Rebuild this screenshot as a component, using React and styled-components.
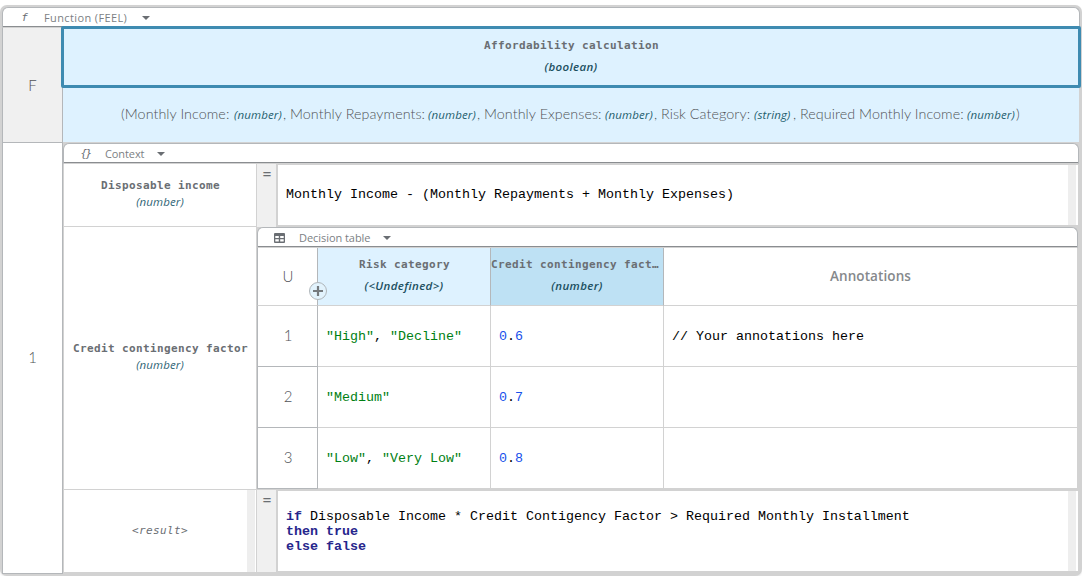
import React from 'react';
import styled, { createGlobalStyle, css } from 'styled-components';

const GRAY = '#d2d2d2';
const LINE = '#b4b7ba';
const HEAD = '#def2ff';

const Global = createGlobalStyle`
  * { box-sizing: border-box; }
  body { margin: 0; background: #fff; overflow: hidden; }
`;

const sans = css`font-family: Lato, "Open Sans", sans-serif; white-space: pre;`;

const Frame = styled.main`
  width: 1082px;
  height: 571px;
  margin-top: 5px;
  padding: 2px;
  background: ${GRAY};
  border-radius: 7px;
  box-shadow: 0 1px 2px #e6e6e6;
  display: flex;
  flex-direction: column;
`;

const Bar = styled.header`
  flex: none;
  height: 21px;
  border: 1px solid ${LINE};
  border-bottom: 1px solid ${GRAY};
  box-shadow: inset 0 -1px 0 #8a8d90;
  border-radius: 6px 6px 0 0;
  background: #fff;
  display: flex;
  align-items: center;
  color: #6a6e73;
`;

const BarIcon = styled.span`
  width: 15px;
  height: 18px;
  margin-left: 14px;
  display: flex;
  align-items: center;
  justify-content: center;
`;

const BarGlyph = styled.i`
  font: italic ${(p) => p.$bold || 400} 11px/16px "DejaVu Sans Mono", monospace;
  letter-spacing: ${(p) => p.$ls || 0}px;
`;

const BarTitle = styled.span`
  font-family: "Open Sans", sans-serif;
  white-space: pre;
  margin-left: 12px;
  width: ${(p) => p.$w}px;
  font-size: 11px;
  line-height: 16px;
  letter-spacing: ${(p) => p.$ls}px;
  color: #7c7f84;
`;

const Caret = styled.span`
  margin-left: 13px;
  border: 4px solid transparent;
  border-top-color: #6a6e73;
  border-bottom: 0;
`;

const FunctionBody = styled.div`
  display: grid;
  grid-template-columns: 61px 1016px;
  grid-template-rows: 115px 431px;
`;

const IndexCell = styled.div`
  ${sans}
  display: flex;
  align-items: center;
  justify-content: center;
  background: ${(p) => (p.$shaded ? '#f0f0f0' : '#fff')};
  border: 1px solid ${LINE};
  border-top: 0;
  padding-bottom: ${(p) => (p.$shaded ? 1 : 3)}px;
  font-size: 15px;
  font-weight: 300;
  color: #505357;
`;

const FunctionHead = styled.div`
  display: flex;
  flex-direction: column;
  background: ${HEAD};
  border-bottom: 1px solid ${GRAY};
`;

const Signature = styled.div`
  flex: none;
  height: 62px;
  width: 1020px;
  margin: -2px 0 0 -2px;
  position: relative;
  border: 3px solid #3e8bb1;
  border-radius: 2px;
  background: ${HEAD};
  padding-top: 6px;
  text-align: center;
`;

const Name = styled.div`
  height: ${(p) => p.$h || 21}px;
  font: bold 11px/${(p) => p.$h || 22}px "DejaVu Sans Mono", monospace;
  letter-spacing: 0.378px;
  padding-left: ${(p) => p.$pl ?? 1}px;
  color: #6a6e73;
  white-space: nowrap;
  overflow: hidden;
  text-overflow: ellipsis;
`;

const Type = styled.div`
  font-family: "Open Sans", sans-serif;
  height: ${(p) => p.$h || 22}px;
  line-height: ${(p) => p.$h || 22}px;
  font-size: 11.5px;
  font-style: italic;
  font-weight: ${(p) => (p.$strong ? 600 : 400)};
  letter-spacing: ${(p) => (p.$strong ? 0.35 : 0.1)}px;
  color: ${(p) => (p.$strong ? '#1b4f60' : '#2f6576')};
`;

const Params = styled.div`
  ${sans}
  flex: 1;
  display: flex;
  justify-content: center;
  line-height: 52px;
  font-size: 14.3px;
  font-weight: 300;
  color: #505357;
`;

const Param = styled.span`
  display: flex;
  align-items: baseline;
`;

const Label = styled.span`
  width: ${(p) => p.$w}px;
  letter-spacing: 0.07px;
`;

const TypeTag = styled.span`
  width: ${(p) => p.$w}px;
  font: italic 400 11.5px/20px "Open Sans", sans-serif;
  letter-spacing: 0.15px;
  color: #24606e;
`;

const Separator = styled.span`
  width: ${(p) => p.$w}px;
`;

const ContextBox = styled.div`
  display: flex;
  flex-direction: column;
`;

const Entries = styled.div`
  width: 1014px;
  margin-left: 1px;
  display: grid;
  grid-template-columns: 193px 821px;
  grid-template-rows: 63px 263px 82px;
`;

const Entry = styled.div`
  display: flex;
  flex-direction: column;
  align-items: center;
  justify-content: center;
  padding-bottom: ${(p) => (p.$last ? 0 : 3)}px;
  background: #fff;
  border-right: 1px solid ${GRAY};
  border-bottom: ${(p) => (p.$last ? 0 : 1)}px solid ${GRAY};
  ${(p) => p.$last && css`
    background: linear-gradient(90deg, #fff 183px, #eee 183px, #eee 191px, #fff 191px);
  `}
`;

const ResultName = styled.i`
  font: italic 11px/16px "DejaVu Sans Mono", monospace;
  letter-spacing: 0.378px;
  color: #6a6e73;
`;

const Literal = styled.div`
  display: grid;
  grid-template-columns: 19px 802px;
`;

const Equals = styled.div`
  background: #f0f0f0;
  color: #6a6e73;
  text-align: center;
  padding-left: 1px;
  font: 14px/20px "DejaVu Sans Mono", monospace;
`;

const Editor = styled.pre`
  margin: 0;
  border: 2px solid ${GRAY};
  border-top-width: 1px;
  border-right: 0;
  border-bottom-width: ${(p) => p.$bb ?? 2}px;
  padding: ${(p) => p.$pt}px 0 0 8px;
  background: linear-gradient(90deg, #fff 790px, #eee 790px, #eee 798px, #fff 798px);
  font: 13.333px/15px "Liberation Mono", monospace;
  color: #000;
  b { color: #26268c; }
`;

const TableBox = styled.div`
  display: flex;
  flex-direction: column;
`;

const Table = styled.div`
  display: grid;
  grid-template-columns: 61px 173px 173px 413px;
  grid-template-rows: 58px 61px 61px 61px;
`;

const Rule = styled.div`
  ${sans}
  position: relative;
  display: flex;
  align-items: center;
  justify-content: center;
  padding: 0 0 2px 1px;
  background: #fff;
  border-left: 1px solid ${LINE};
  border-right: 1px solid ${LINE};
  border-bottom: 1px solid ${(p) => (p.$head ? GRAY : LINE)};
  color: #505357;
  font-size: 15px;
  font-weight: 300;
`;

const ColumnHead = styled.div`
  background: ${(p) => p.$bg || '#fff'};
  border-right: ${(p) => (p.$end ? 0 : 1)}px solid ${LINE};
  border-bottom: 1px solid ${GRAY};
  padding-top: 6px;
  text-align: center;
`;

const NotesHead = styled.div`
  font-family: "Open Sans", sans-serif;
  line-height: 44px;
  font-size: 13.5px;
  font-weight: 600;
  letter-spacing: 0.1px;
  color: #85888b;
`;

const Cell = styled.div`
  display: flex;
  align-items: center;
  padding-left: 8px;
  background: #fff;
  border-right: ${(p) => (p.$end ? 0 : 1)}px solid ${GRAY};
  border-bottom: 1px solid ${GRAY};
  font: 13.333px/15px "Liberation Mono", monospace;
  white-space: pre;
  color: #000;
`;

const Str = styled.span`color: #008013;`;
const Num = styled.span`color: #1750eb;`;

const AddButton = styled.button`
  position: absolute;
  right: -10px;
  bottom: 5px;
  z-index: 1;
  width: 18px;
  height: 18px;
  padding: 0;
  border: 1px solid #b0b6ba;
  border-radius: 50%;
  background: #e2f3fd;
  display: flex;
  align-items: center;
  justify-content: center;
`;

const rows = [
  { id: 1, input: ['"High"', '"Decline"'], out: '0.6', note: '// Your annotations here' },
  { id: 2, input: ['"Medium"'], out: '0.7', note: '' },
  { id: 3, input: ['"Low"', '"Very Low"'], out: '0.8', note: '' },
];

const params = [
  { name: '(Monthly Income: ', w: 113, type: '(number)', tw: 49, post: ', ' },
  { name: 'Monthly Repayments: ', w: 138, type: '(number)', tw: 49, post: ', ' },
  { name: 'Monthly Expenses: ', w: 121, type: '(number)', tw: 49, post: ', ' },
  { name: 'Risk Category: ', w: 93, type: '(string)', tw: 39, post: ', ' },
  { name: 'Required Monthly Income: ', w: 167, type: '(number)', tw: 49, post: ')' },
];

const TableIcon = () => (
  <svg width="11" height="10" viewBox="0 0 11 10">
    <path fill="#6a6e73" fillRule="evenodd" d="M1 0h9a1 1 0 0 1 1 1v8a1 1 0 0 1-1 1H1a1 1 0 0 1-1-1V1a1 1 0 0 1 1-1zM1.3 3v2h3.5V3zM6.2 3v2h3.5V3zM1.3 6.3v2.2h3.5V6.3zM6.2 6.3v2.2h3.5V6.3z" />
  </svg>
);

const Decimal = ({ value }) => {
  const [a, b] = value.split('.');
  return <><Num>{a}</Num>.<Num>{b}</Num></>;
};

function DecisionTable() {
  return (
    <TableBox>
      <Bar>
        <BarIcon><TableIcon /></BarIcon>
        <BarTitle $w={71} $ls={-0.05}>Decision table</BarTitle>
        <Caret />
      </Bar>
      <Table>
        <Rule $head>
          U
          <AddButton aria-label="Add column">
            <svg width="12" height="12" viewBox="0 0 12 12"><path d="M6 1v10M1 6h10" stroke="#757a7e" strokeWidth="2.2" /></svg>
          </AddButton>
        </Rule>
        <ColumnHead $bg={HEAD}>
          <Name>Risk category</Name>
          <Type $strong>{'(<Undefined>)'}</Type>
        </ColumnHead>
        <ColumnHead $bg="#bee1f4">
          <Name $pl={0}>Credit contingency factor</Name>
          <Type $strong>(number)</Type>
        </ColumnHead>
        <ColumnHead $end><NotesHead>Annotations</NotesHead></ColumnHead>
        {rows.map((r) => (
          <React.Fragment key={r.id}>
            <Rule>{r.id}</Rule>
            <Cell>{r.input.map((s, i) => <React.Fragment key={s}>{i > 0 && ', '}<Str>{s}</Str></React.Fragment>)}</Cell>
            <Cell><Decimal value={r.out} /></Cell>
            <Cell $end>{r.note}</Cell>
          </React.Fragment>
        ))}
      </Table>
    </TableBox>
  );
}

export default function App() {
  return (
    <>
      <Global />
      <Frame>
        <Bar>
          <BarIcon><BarGlyph>f</BarGlyph></BarIcon>
          <BarTitle $w={85} $ls={0.38}>Function (FEEL)</BarTitle>
          <Caret />
        </Bar>
        <FunctionBody>
          <IndexCell $shaded>F</IndexCell>
          <FunctionHead>
            <Signature>
              <Name>Affordability calculation</Name>
              <Type $strong>(boolean)</Type>
            </Signature>
            <Params>
              {params.map((p) => (
                <Param key={p.name}>
                  <Label $w={p.w}>{p.name}</Label>
                  <TypeTag $w={p.tw}>{p.type}</TypeTag>
                  <Separator $w={p.post === ')' ? 5 : 7}>{p.post}</Separator>
                </Param>
              ))}
            </Params>
          </FunctionHead>
          <IndexCell>1</IndexCell>
          <ContextBox>
            <Bar>
              <BarIcon><BarGlyph $ls={-1.5}>{'{}'}</BarGlyph></BarIcon>
              <BarTitle $w={39} $ls={-0.1}>Context</BarTitle>
              <Caret />
            </Bar>
            <Entries>
              <Entry>
                <Name $h={17}>Disposable income</Name>
                <Type $h={16}>(number)</Type>
              </Entry>
              <Literal>
                <Equals>=</Equals>
                <Editor $pt={22}>Monthly Income - (Monthly Repayments + Monthly Expenses)</Editor>
              </Literal>
              <Entry>
                <Name $h={17}>Credit contingency factor</Name>
                <Type $h={16}>(number)</Type>
              </Entry>
              <DecisionTable />
              <Entry $last><ResultName>{'<result>'}</ResultName></Entry>
              <Literal>
                <Equals>=</Equals>
                <Editor $pt={18} $bb={1}><b>if</b>{' Disposable Income * Credit Contigency Factor > Required Monthly Installment\n'}<b>then true</b>{'\n'}<b>else false</b></Editor>
              </Literal>
            </Entries>
          </ContextBox>
        </FunctionBody>
      </Frame>
    </>
  );
}
